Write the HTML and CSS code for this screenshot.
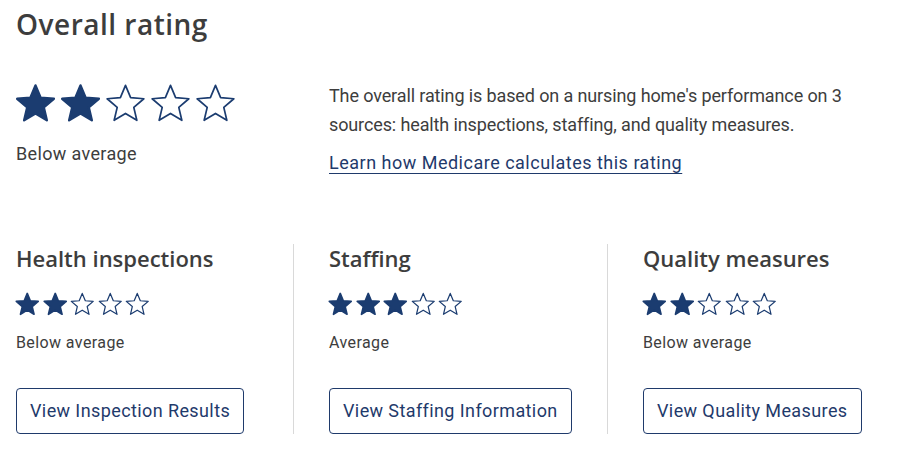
FILE: index.html
```html
<!DOCTYPE html>
<html lang="en">
<head>
    <meta charset="UTF-8">
    <meta name="viewport" content="width=device-width, initial-scale=1.0">
    <title>Overall rating</title>
    <link rel="stylesheet" href="styles.css">
</head>
<body>
    <svg class="defs" width="0" height="0" aria-hidden="true">
        <defs>
            <path id="star" d="M12 1.4L15 8.57L22.75 9.21L16.85 14.28L18.64 21.84L12 17.8L5.36 21.84L7.15 14.28L1.25 9.21L9 8.57Z"/>
        </defs>
    </svg>

    <div class="rating-page">
        <h1 class="page-title">Overall rating</h1>

        <div class="overall">
            <div class="overall-score">
                <div class="stars stars-lg">
                    <svg viewBox="0 0 24 24" class="star full"><use href="#star"/></svg>
                    <svg viewBox="0 0 24 24" class="star full"><use href="#star"/></svg>
                    <svg viewBox="0 0 24 24" class="star"><use href="#star"/></svg>
                    <svg viewBox="0 0 24 24" class="star"><use href="#star"/></svg>
                    <svg viewBox="0 0 24 24" class="star"><use href="#star"/></svg>
                </div>
                <p class="score-label score-label-lg">Below average</p>
            </div>
            <div class="overall-info">
                <p>The overall rating is based on a nursing home's performance on 3 sources: health inspections, staffing, and quality measures.</p>
                <a href="#" class="info-link">Learn how Medicare calculates this rating</a>
            </div>
        </div>

        <div class="categories">
            <div class="category">
                <h2 class="category-title">Health inspections</h2>
                <div class="stars stars-sm">
                    <svg viewBox="0 0 24 24" class="star full"><use href="#star"/></svg>
                    <svg viewBox="0 0 24 24" class="star full"><use href="#star"/></svg>
                    <svg viewBox="0 0 24 24" class="star"><use href="#star"/></svg>
                    <svg viewBox="0 0 24 24" class="star"><use href="#star"/></svg>
                    <svg viewBox="0 0 24 24" class="star"><use href="#star"/></svg>
                </div>
                <p class="score-label">Below average</p>
                <a href="#" class="outline-button">View Inspection Results</a>
            </div>
            <div class="category">
                <h2 class="category-title">Staffing</h2>
                <div class="stars stars-sm">
                    <svg viewBox="0 0 24 24" class="star full"><use href="#star"/></svg>
                    <svg viewBox="0 0 24 24" class="star full"><use href="#star"/></svg>
                    <svg viewBox="0 0 24 24" class="star full"><use href="#star"/></svg>
                    <svg viewBox="0 0 24 24" class="star"><use href="#star"/></svg>
                    <svg viewBox="0 0 24 24" class="star"><use href="#star"/></svg>
                </div>
                <p class="score-label">Average</p>
                <a href="#" class="outline-button">View Staffing Information</a>
            </div>
            <div class="category">
                <h2 class="category-title">Quality measures</h2>
                <div class="stars stars-sm">
                    <svg viewBox="0 0 24 24" class="star full"><use href="#star"/></svg>
                    <svg viewBox="0 0 24 24" class="star full"><use href="#star"/></svg>
                    <svg viewBox="0 0 24 24" class="star"><use href="#star"/></svg>
                    <svg viewBox="0 0 24 24" class="star"><use href="#star"/></svg>
                    <svg viewBox="0 0 24 24" class="star"><use href="#star"/></svg>
                </div>
                <p class="score-label">Below average</p>
                <a href="#" class="outline-button">View Quality Measures</a>
            </div>
        </div>
    </div>
</body>
</html>
```

FILE: styles.css
```css
* {
    margin: 0;
    padding: 0;
    box-sizing: border-box;
}

body {
    font-family: Roboto, 'Liberation Sans', sans-serif;
    color: #3d3d3d;
    background: white;
}

.defs {
    position: absolute;
}

.rating-page {
    padding: 6px 16px 0 16px;
}

.page-title {
    font-family: 'Open Sans', sans-serif;
    font-size: 28px;
    font-weight: 600;
    letter-spacing: 0.5px;
    line-height: 36px;
    color: #3d3d3d;
}

/* overall block */
.overall {
    display: grid;
    grid-template-columns: 313px 1fr;
    margin-top: 41px;
}

.stars {
    display: flex;
}

.star {
    fill: white;
    stroke: #1b3c70;
    stroke-linejoin: round;
}

.star.full {
    fill: #1b3c70;
}

.stars-lg {
    gap: 4px;
    margin-left: -1px;
}

.stars-lg .star {
    width: 41px;
    height: 41px;
    stroke-width: 1;
}

.stars-lg .star.full {
    stroke-width: 1.4;
}

.stars-sm {
    gap: 3px;
    margin-left: -1px;
}

.stars-sm .star {
    width: 24.5px;
    height: 24.5px;
    stroke-width: 1.2;
}

.stars-sm .star.full {
    stroke-width: 1.6;
}

.score-label {
    font-size: 16px;
    letter-spacing: 0.4px;
    line-height: 22px;
}

.score-label-lg {
    font-size: 18px;
    letter-spacing: 0.35px;
    margin-top: 19px;
}

.overall-info {
    margin-top: -2px;
}

.overall-info p {
    font-size: 18px;
    letter-spacing: -0.12px;
    line-height: 29px;
}

.info-link {
    display: inline-block;
    margin-top: 12px;
    font-size: 18px;
    letter-spacing: 0.5px;
    line-height: 24px;
    color: #1f3a6b;
    text-decoration: underline;
    text-underline-offset: 4px;
}

/* categories */
.categories {
    display: grid;
    grid-template-columns: 277px 314px 1fr;
    margin-top: 69px;
}

.category + .category {
    border-left: 1px solid #d9d9d9;
    padding-left: 35px;
}

.category-title {
    font-family: 'Open Sans', sans-serif;
    font-size: 22px;
    font-weight: 600;
    line-height: 28px;
    color: #3d3d3d;
}

.category .stars-sm {
    margin-top: 20px;
}

.category .score-label {
    margin-top: 15px;
}

.outline-button {
    display: inline-block;
    margin-top: 34px;
    padding: 0 13px;
    height: 46px;
    line-height: 43px;
    border: 1.5px solid #1f3a6b;
    border-radius: 4px;
    font-size: 18px;
    letter-spacing: 0.4px;
    color: #1f3a6b;
    text-decoration: none;
}
```
